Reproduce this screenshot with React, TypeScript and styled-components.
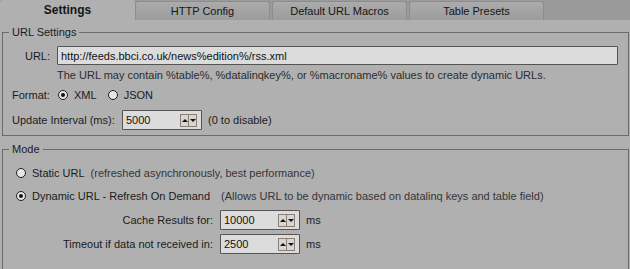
import styled, { createGlobalStyle } from "styled-components";

const GlobalStyle = createGlobalStyle`
	html, body {
		margin: 0;
		padding: 0;
		background: #b0b0b0;
	}
	body {
		font-family: "Liberation Sans", Arial, sans-serif;
		font-size: 11px;
		color: #1b1b1b;
	}
`;

const Window = styled.div`
	width: 630px;
	height: 269px;
	background: #b0b0b0;
	display: flex;
	flex-direction: column;
	overflow: hidden;
`;

const TabStrip = styled.div`
	height: 20px;
	flex-shrink: 0;
	display: flex;
	align-items: flex-end;
	gap: 2px;
	background: #9a9a9a;
`;

const Tab = styled.div<{ $active?: boolean }>`
	box-sizing: border-box;
	width: 135px;
	height: ${(p) => (p.$active ? "20px" : "19px")};
	display: flex;
	align-items: center;
	justify-content: center;
	font-weight: ${(p) => (p.$active ? "bold" : "normal")};
	font-size: ${(p) => (p.$active ? "12px" : "11px")};
	color: #151515;
	background: ${(p) => (p.$active ? "#b0b0b0" : "linear-gradient(#ababab, #9c9c9c)")};
	border: ${(p) => (p.$active ? "none" : "1px solid #8d8d8d")};
	border-bottom: none;
	border-radius: 3px 3px 0 0;
	margin-right: ${(p) => (p.$active ? "-2px" : "0")};
`;

const Panel = styled.div`
	flex: 1;
	display: flex;
	flex-direction: column;
	padding: 6px 1px 0 2px;
`;

const GroupBox = styled.fieldset<{ $gapTop?: number; $padBottom: number }>`
	margin: ${(p) => p.$gapTop ?? 0}px 0 0 0;
	padding: 0 0 ${(p) => p.$padBottom}px 0;
	border: 1px solid #6c6c6c;
	min-width: 0;
	flex-shrink: 0;
	display: flex;
	flex-direction: column;
`;

const Legend = styled.legend`
	margin-left: 6px;
	padding: 0 3px;
	line-height: 13px;
	color: #1b1b1b;
`;

const Row = styled.div<{ $top: number; $left?: number }>`
	display: flex;
	align-items: center;
	flex-shrink: 0;
	margin-top: ${(p) => p.$top}px;
	padding-left: ${(p) => p.$left ?? 0}px;
	line-height: 14px;
	white-space: nowrap;
`;

const Label = styled.span<{ $width?: number; $right?: boolean }>`
	display: inline-block;
	width: ${(p) => (p.$width ? `${p.$width}px` : "auto")};
	text-align: ${(p) => (p.$right ? "right" : "left")};
	flex-shrink: 0;
`;

const TextBox = styled.div`
	box-sizing: border-box;
	width: 561px;
	height: 19px;
	margin-left: 7px;
	padding-left: 3px;
	display: flex;
	align-items: center;
	background: #dcdcdc;
	border: 1px solid #545454;
	border-radius: 1px;
	color: #111;
`;

const Hint = styled.div<{ $top: number }>`
	margin-top: ${(p) => p.$top}px;
	padding-left: 54px;
	line-height: 14px;
	color: #2c2c2c;
	white-space: nowrap;
`;

const RadioOption = styled.label<{ $gap?: number }>`
	display: inline-flex;
	align-items: center;
	gap: 6px;
	margin-right: ${(p) => p.$gap ?? 0}px;
`;

const RadioCircle = styled.span<{ $checked?: boolean }>`
	box-sizing: border-box;
	width: 10px;
	height: 10px;
	border-radius: 50%;
	border: 1px solid #1e1e1e;
	background: #e6e6e6;
	display: flex;
	align-items: center;
	justify-content: center;

	&::after {
		content: "";
		width: 4px;
		height: 4px;
		border-radius: 50%;
		background: ${(p) => (p.$checked ? "#111" : "transparent")};
	}
`;

const Note = styled.span<{ $gap: number }>`
	margin-left: ${(p) => p.$gap}px;
	color: #353535;
`;

const SpinBox = styled.div`
	box-sizing: border-box;
	width: 80px;
	height: 20px;
	display: flex;
	align-items: center;
	padding: 0 4px 0 3px;
	background: #dcdcdc;
	border: 1px solid #545454;
	border-radius: 1px;
	color: #111;
	flex-shrink: 0;
`;

const SpinValue = styled.span`
	flex: 1;
`;

const SpinButton = styled.span<{ $up?: boolean }>`
	box-sizing: border-box;
	width: 9px;
	height: 13px;
	display: flex;
	align-items: center;
	justify-content: center;
	border: 1px solid #8a7f70;
	background: #d6d6d6;
	margin-left: ${(p) => (p.$up ? "0" : "-1px")};

	&::after {
		content: "";
		width: 0;
		height: 0;
		border-left: 3px solid transparent;
		border-right: 3px solid transparent;
		${(p) => (p.$up ? "border-bottom: 3px solid #111;" : "border-top: 3px solid #111;")}
	}
`;

const Unit = styled.span<{ $gap: number }>`
	margin-left: ${(p) => p.$gap}px;
	display: inline-flex;
`;

function Radio({ label, checked, gap }: { label: string; checked?: boolean; gap?: number }): JSX.Element {
	return (
		<RadioOption $gap={gap}>
			<RadioCircle $checked={checked} />
			{label}
		</RadioOption>
	);
}

function Spinner({ value }: { value: string }): JSX.Element {
	return (
		<SpinBox>
			<SpinValue>{value}</SpinValue>
			<SpinButton $up />
			<SpinButton />
		</SpinBox>
	);
}

export default function App(): JSX.Element {
	return (
		<Window>
			<GlobalStyle />
			<TabStrip>
				<Tab $active>Settings</Tab>
				<Tab>HTTP Config</Tab>
				<Tab>Default URL Macros</Tab>
				<Tab>Table Presets</Tab>
			</TabStrip>

			<Panel>
				<GroupBox $padBottom={5}>
					<Legend>URL Settings</Legend>
					<Row $top={7}>
						<Label $width={47} $right>URL:</Label>
						<TextBox>http://feeds.bbci.co.uk/news%edition%/rss.xml</TextBox>
					</Row>
					<Hint $top={3}>
						The URL may contain %table%, %datalinqkey%, or %macroname% values to create dynamic URLs.
					</Hint>
					<Row $top={6} $left={9}>
						<Label $width={46}>Format:</Label>
						<Radio label="XML" checked gap={11} />
						<Radio label="JSON" />
					</Row>
					<Row $top={8} $left={9}>
						<Label $width={110}>Update Interval (ms):</Label>
						<Spinner value="5000" />
						<Unit $gap={6}>(0 to disable)</Unit>
					</Row>
				</GroupBox>

				<GroupBox $gapTop={7} $padBottom={16}>
					<Legend>Mode</Legend>
					<Row $top={10} $left={13}>
						<Radio label="Static URL" />
						<Note $gap={6}>(refreshed asynchronously, best performance)</Note>
					</Row>
					<Row $top={9} $left={13}>
						<Radio label="Dynamic URL - Refresh On Demand" checked />
						<Note $gap={11}>(Allows URL to be dynamic based on datalinq keys and table field)</Note>
					</Row>
					<Row $top={7}>
						<Label $width={210} $right>Cache Results for:</Label>
						<Unit $gap={7}><Spinner value="10000" /></Unit>
						<Unit $gap={6}>ms</Unit>
					</Row>
					<Row $top={4}>
						<Label $width={210} $right>Timeout if data not received in:</Label>
						<Unit $gap={7}><Spinner value="2500" /></Unit>
						<Unit $gap={6}>ms</Unit>
					</Row>
				</GroupBox>
			</Panel>
		</Window>
	);
}
